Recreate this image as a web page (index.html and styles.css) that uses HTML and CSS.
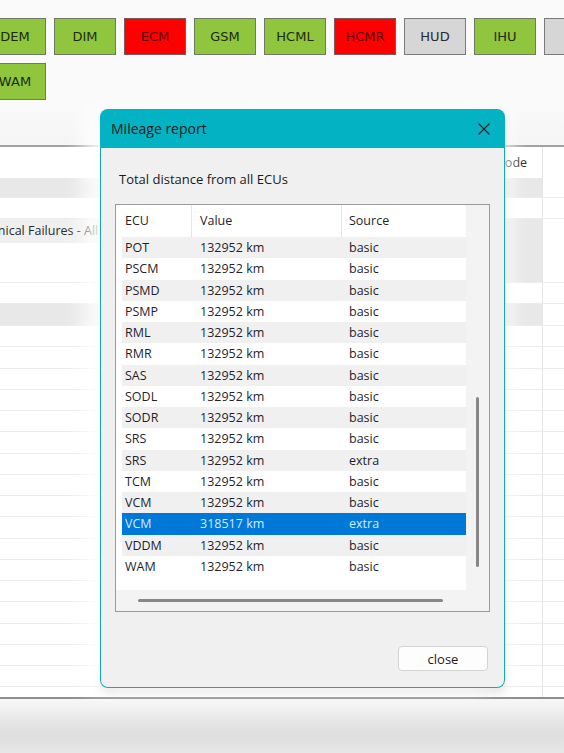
FILE: index.html
```html
<!DOCTYPE html>
<html>
<head>
<meta charset="utf-8">
<link rel="stylesheet" href="styles.css">
</head>
<body>
<div class="page">
  <div class="toolbar">
    <div class="ecu green">DEM</div>
    <div class="ecu green">DIM</div>
    <div class="ecu red">ECM</div>
    <div class="ecu green">GSM</div>
    <div class="ecu green">HCML</div>
    <div class="ecu red">HCMR</div>
    <div class="ecu gray">HUD</div>
    <div class="ecu green">IHU</div>
    <div class="ecu gray"></div>
    <div class="ecu green">WAM</div>
  </div>
  <div class="gap"></div>
  <div class="grid">
    <div class="row hdr"><div class="c1"></div><div class="c2">Code</div><div class="c3"></div></div>
    <div class="row g20"><div class="c1 shade"></div><div class="c2 shade"></div><div class="c3"></div></div>
    <div class="row w21"><div class="c1"></div><div class="c2"></div><div class="c3"></div></div>
    <div class="row tall">
      <div class="c1 split"><div class="split-top"><span class="cut">Mechanical Failures - All</span></div></div>
      <div class="c2 shade"></div><div class="c3"></div>
    </div>
    <div class="row w21"><div class="c1"></div><div class="c2"></div><div class="c3"></div></div>
    <div class="row g22"><div class="c1 shade"></div><div class="c2 shade"></div><div class="c3"></div></div>
    <div class="row w"><div class="c1"></div><div class="c2"></div><div class="c3"></div></div>
    <div class="row w"><div class="c1"></div><div class="c2"></div><div class="c3"></div></div>
    <div class="row w"><div class="c1"></div><div class="c2"></div><div class="c3"></div></div>
    <div class="row w"><div class="c1"></div><div class="c2"></div><div class="c3"></div></div>
    <div class="row w"><div class="c1"></div><div class="c2"></div><div class="c3"></div></div>
    <div class="row w"><div class="c1"></div><div class="c2"></div><div class="c3"></div></div>
    <div class="row w"><div class="c1"></div><div class="c2"></div><div class="c3"></div></div>
    <div class="row w"><div class="c1"></div><div class="c2"></div><div class="c3"></div></div>
    <div class="row w"><div class="c1"></div><div class="c2"></div><div class="c3"></div></div>
    <div class="row w"><div class="c1"></div><div class="c2"></div><div class="c3"></div></div>
    <div class="row w"><div class="c1"></div><div class="c2"></div><div class="c3"></div></div>
    <div class="row w"><div class="c1"></div><div class="c2"></div><div class="c3"></div></div>
    <div class="row w"><div class="c1"></div><div class="c2"></div><div class="c3"></div></div>
    <div class="row w"><div class="c1"></div><div class="c2"></div><div class="c3"></div></div>
    <div class="row w"><div class="c1"></div><div class="c2"></div><div class="c3"></div></div>
    <div class="row w"><div class="c1"></div><div class="c2"></div><div class="c3"></div></div>
    <div class="row w"><div class="c1"></div><div class="c2"></div><div class="c3"></div></div>
    <div class="row w"><div class="c1"></div><div class="c2"></div><div class="c3"></div></div>
  </div>
  <div class="footer"></div>
</div>

<div class="dialog">
  <div class="titlebar">
    <span class="title">Mileage report</span>
    <svg class="x" width="12" height="12" viewBox="0 0 12 12"><path d="M0.5 0.5 L11.5 11.5 M11.5 0.5 L0.5 11.5" stroke="#1c1c1c" stroke-width="1.1" fill="none"/></svg>
  </div>
  <div class="body">
    <div class="caption">Total distance from all ECUs</div>
    <div class="listview">
      <div class="content">
        <div class="lrow lhead"><div class="k">ECU</div><div class="v">Value</div><div class="s">Source</div></div>
        <div class="lrow alt"><div class="k">POT</div><div class="v">132952 km</div><div class="s">basic</div></div>
        <div class="lrow"><div class="k">PSCM</div><div class="v">132952 km</div><div class="s">basic</div></div>
        <div class="lrow alt"><div class="k">PSMD</div><div class="v">132952 km</div><div class="s">basic</div></div>
        <div class="lrow"><div class="k">PSMP</div><div class="v">132952 km</div><div class="s">basic</div></div>
        <div class="lrow alt"><div class="k">RML</div><div class="v">132952 km</div><div class="s">basic</div></div>
        <div class="lrow"><div class="k">RMR</div><div class="v">132952 km</div><div class="s">basic</div></div>
        <div class="lrow alt"><div class="k">SAS</div><div class="v">132952 km</div><div class="s">basic</div></div>
        <div class="lrow"><div class="k">SODL</div><div class="v">132952 km</div><div class="s">basic</div></div>
        <div class="lrow alt"><div class="k">SODR</div><div class="v">132952 km</div><div class="s">basic</div></div>
        <div class="lrow"><div class="k">SRS</div><div class="v">132952 km</div><div class="s">basic</div></div>
        <div class="lrow alt"><div class="k">SRS</div><div class="v">132952 km</div><div class="s">extra</div></div>
        <div class="lrow"><div class="k">TCM</div><div class="v">132952 km</div><div class="s">basic</div></div>
        <div class="lrow alt"><div class="k">VCM</div><div class="v">132952 km</div><div class="s">basic</div></div>
        <div class="lrow sel"><div class="k">VCM</div><div class="v">318517 km</div><div class="s">extra</div></div>
        <div class="lrow alt"><div class="k">VDDM</div><div class="v">132952 km</div><div class="s">basic</div></div>
        <div class="lrow"><div class="k">WAM</div><div class="v">132952 km</div><div class="s">basic</div></div>
      </div>
      <div class="vtrack"><div class="vthumb"></div></div>
      <div class="htrack"><div class="hthumb"></div></div>
      <div class="corner"></div>
    </div>
    <div class="actions"><div class="btn">close</div></div>
  </div>
</div>
</body>
</html>
```

FILE: styles.css
```css
html, body {
  margin: 0;
  padding: 0;
}
body {
  width: 564px;
  height: 753px;
  overflow: hidden;
  position: relative;
  background: #fafafa;
  font-family: "Open Sans", "Noto Sans", sans-serif;
  color: #1f1f28;
}
.page {
  display: flex;
  flex-direction: column;
  height: 753px;
}
.toolbar {
  display: flex;
  flex-wrap: wrap;
  gap: 8px;
  width: 630px;
  margin-left: -16px;
  padding-top: 18px;
  height: 82px;
  box-sizing: content-box;
}
.ecu {
  width: 62px;
  height: 37px;
  box-sizing: border-box;
  border: 1px solid #6f7a66;
  display: flex;
  align-items: center;
  justify-content: center;
  font-family: "DejaVu Sans", sans-serif;
  font-size: 13px;
  color: #1d2a10;
}
.ecu.green { background: #8fc63e; }
.ecu.red { background: #ff0000; color: #5a0000; border-color: #7a5a5a; }
.ecu.gray { background: #d6d6d6; color: #2a2a2a; border-color: #7a7a7a; }

.gap {
  height: 45px;
  background: linear-gradient(#fafafa, #f5f5f5);
}
.grid {
  border-top: 2px solid #a2a2a2;
  height: 550px;
  overflow: hidden;
  background: #fff;
  display: flex;
  flex-direction: column;
}
.row {
  display: grid;
  grid-template-columns: 490px 53px 1fr;
  flex-shrink: 0;
}
.row > div { border-bottom: 1px solid #ebebeb; box-sizing: border-box; }
.row .c2 { border-right: 1px solid #e6e6e6; }
.hdr { height: 31px; }
.hdr > div { border-bottom: none; }
.hdr .c2 {
  font-size: 12.5px;
  padding-left: 7px;
  line-height: 31px;
  color: #222;
}
.g20 { height: 20px; }
.g22 { height: 22px; }
.w21 { height: 21px; }
.w { height: 21.25px; }
.tall { height: 64px; }
.shade { background: #e8e8e8; }
.split { display: flex; flex-direction: column; }
.split-top {
  height: 24px;
  background: #efefef;
  font-size: 12.5px;
  line-height: 24px;
  overflow: hidden;
  white-space: nowrap;
  color: #2a2a2a;
}
.cut { display: inline-block; margin-left: -41px; }

.footer {
  flex: 1;
  border-top: 2px solid #8e8e8e;
  background: linear-gradient(#f7f7f7 0px, #f1f1f1 10px, #e9e9e9 18px, #dedede 36px, #e8e8e8 56px);
}

.dialog {
  position: absolute;
  left: 100px;
  top: 109px;
  width: 405px;
  height: 579px;
  display: flex;
  flex-direction: column;
  border-radius: 8px;
  box-shadow: -16px 0 22px 0 rgba(255,255,255,0.9), 10px 0 14px 0 rgba(255,255,255,0.6), 0 4px 10px rgba(0,0,0,0.16);
}
.titlebar {
  height: 39px;
  background: #04b3c3;
  border-radius: 8px 8px 0 0;
  display: flex;
  align-items: center;
  justify-content: space-between;
  padding: 0 15px 0 11px;
}
.title {
  font-size: 14px;
  color: #1a1a1a;
}
.x { display: block; }
.body {
  flex: 1;
  background: #f0f0f0;
  border: 1px solid #14a9b6;
  border-top: none;
  border-radius: 0 0 8px 8px;
  padding: 23px 14px 16px 14px;
  display: flex;
  flex-direction: column;
}
.caption {
  font-size: 13px;
  line-height: 16px;
  padding-left: 4px;
  color: #1a1a1a;
}
.listview {
  margin-top: 17px;
  height: 408px;
  box-sizing: border-box;
  border: 1px solid #9a9a9a;
  background: #fff;
  display: grid;
  grid-template-columns: 1fr 23px;
  grid-template-rows: 1fr 21px;
}
.content {
  padding-left: 6px;
  overflow: hidden;
}
.lrow {
  display: grid;
  grid-template-columns: 70px 150px 1fr;
  height: 21.25px;
  font-size: 12.5px;
  line-height: 21.25px;
  color: #1f1f2c;
}
.lrow .k { padding-left: 3px; }
.lrow .v { padding-left: 8px; }
.lrow .s { padding-left: 7px; }
.lrow.alt { background: #f0f0f0; }
.lrow.sel { background: #0078d7; color: #d4ebff; }
.lrow.lhead {
  height: 32px;
  line-height: 32px;
  background: #fff;
}
.lhead .k, .lhead .v {
  border-right: 1px solid #e5e5e5;
}
.vtrack {
  background: #f3f3f3;
  display: flex;
  justify-content: center;
}
.vthumb {
  width: 3px;
  height: 170px;
  margin-top: 192px;
  background: #878787;
  border-radius: 2px;
}
.htrack {
  background: #f3f3f3;
  display: flex;
  align-items: center;
}
.hthumb {
  width: 305px;
  height: 3px;
  margin-left: 22px;
  background: #878787;
  border-radius: 2px;
}
.corner { background: #f3f3f3; }
.actions {
  margin-top: auto;
  display: flex;
  justify-content: flex-end;
  padding-right: 2px;
}
.btn {
  width: 90px;
  height: 25px;
  box-sizing: border-box;
  border: 1px solid #d3d3d3;
  border-radius: 4px;
  background: #fdfdfd;
  font-size: 13px;
  display: flex;
  align-items: center;
  justify-content: center;
  color: #1a1a1a;
}
```
